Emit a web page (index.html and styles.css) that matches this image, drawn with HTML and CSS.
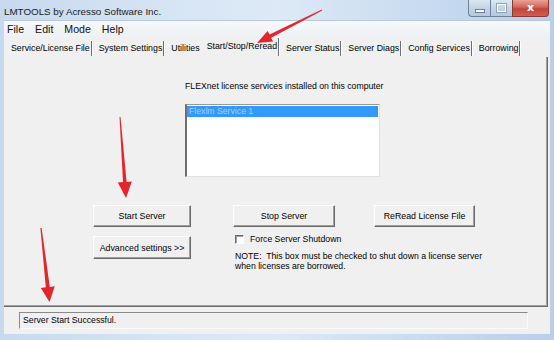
FILE: index.html
```html
<!DOCTYPE html>
<html>
<head>
<meta charset="utf-8">
<link rel="stylesheet" href="styles.css">
</head>
<body>
<div class="win">
  <div class="titlebar">
    <span class="title">LMTOOLS by Acresso Software Inc.</span>
    <div class="ctrls">
      <div class="cbtn min"><span class="minbar"></span></div>
      <div class="cbtn max"><span class="maxbox"></span></div>
      <div class="cbtn close"><span class="x">x</span></div>
    </div>
  </div>
  <div class="client">
    <div class="menubar">
      <span class="mi">File</span><span class="mi">Edit</span><span class="mi">Mode</span><span class="mi">Help</span>
    </div>
    <div class="tabs">
      <span class="tab">Service/License File</span>
      <span class="tab">System Settings</span>
      <span class="tab nosep">Utilities</span>
      <span class="tab sel">Start/Stop/Reread</span>
      <span class="tab">Server Status</span>
      <span class="tab">Server Diags</span>
      <span class="tab">Config Services</span>
      <span class="tab">Borrowing</span>
    </div>
    <div class="page">
      <div class="svc">
        <div class="svc-label">FLEXnet license services installed on this computer</div>
        <div class="listbox">
          <div class="item selitem">Flexlm Service 1</div>
        </div>
      </div>
      <div class="controls">
        <button class="btn c1">Start Server</button>
        <button class="btn c3">Stop Server</button>
        <button class="btn c5">ReRead License File</button>
        <button class="btn c1 r2">Advanced settings &gt;&gt;</button>
        <div class="force r2">
          <div class="chkrow"><span class="chk"></span><span>Force Server Shutdown</span></div>
          <div class="note">NOTE:&nbsp; This box must be checked to shut down a license server<br>when licenses are borrowed.</div>
        </div>
      </div>
    </div>
    <div class="status">
      <div class="field">Server Start Successful.</div>
    </div>
  </div>
</div>
<svg class="arrows" width="554" height="340" viewBox="0 0 554 340">
  <polygon fill="#e4252c" points="322.2,10.4 271.2,37.8 273.1,41.5 257,43 267.6,30.9 269.5,34.6 321.8,9.6"/>
  <polygon fill="#e4252c" points="120.5,117 126.6,181.9 131.8,181.5 126,198 117.8,182.5 123,182.1 119.5,117"/>
  <polygon fill="#e4252c" points="41.6,227.9 49.8,286.9 54.75,286.3 49.5,302 40.85,287.9 45.8,287.3 40.4,228.1"/>
</svg>
</body>
</html>
```
FILE: styles.css
```css
html, body {
  margin: 0;
  padding: 0;
  width: 554px;
  height: 340px;
  overflow: hidden;
  background: #c9dbee;
}
.win {
  position: relative;
  width: 554px;
  height: 340px;
  display: flex;
  flex-direction: column;
  background: linear-gradient(to right, #c6d9ee 0%, #d6e5f4 30%, #dde9f6 50%, #c9dcf0 75%, #b9cfe8 100%);
  font-family: "Liberation Sans", Arial, sans-serif;
  color: #000;
}
.titlebar {
  height: 20px;
  display: flex;
  align-items: center;
  padding-left: 4px;
}
.title {
  font-size: 9.8px;
  color: #1a1a1a;
  padding-top: 2px;
}
.ctrls {
  margin-left: auto;
  margin-right: 5px;
  align-self: flex-start;
  display: flex;
}
.cbtn {
  height: 17px;
  border: 1px solid #6d819b;
  border-top: none;
  display: flex;
  align-items: center;
  justify-content: center;
  box-sizing: border-box;
}
.min {
  width: 22px;
  border-right: none;
  border-bottom-left-radius: 4px;
  background: linear-gradient(#dce7f3, #c3d4e8 50%, #b4c8df);
}
.max {
  width: 22px;
  border-right: none;
  background: linear-gradient(#dce7f3, #c3d4e8 50%, #b4c8df);
}
.close {
  width: 37px;
  border-bottom-right-radius: 4px;
  background: linear-gradient(#e8a393, #d2655a 45%, #c2443a 55%, #cf5f4f);
  border-color: #8a3a33;
}
.minbar {
  width: 8px;
  height: 2px;
  margin-top: 5px;
  background: #fff;
  border: 1px solid #6a7d95;
}
.maxbox {
  width: 7px;
  height: 6px;
  border: 1px solid #fff;
  outline: 1px solid #8fa2ba;
}
.x {
  color: #fff;
  font-family: "DejaVu Sans", sans-serif;
  font-weight: bold;
  font-size: 11px;
  line-height: 11px;
  margin-top: -2px;
}
.client {
  flex: 1;
  margin: 0 4px 6px 4px;
  background: #f0f0f0;
  display: flex;
  flex-direction: column;
}
.menubar {
  height: 17px;
  display: flex;
  align-items: center;
  padding-left: 3px;
  background: linear-gradient(#f7f8fa, #eef1f5);
  border-top: 1px solid #b6c8dc;
  box-sizing: border-box;
}
.mi {
  font-size: 10.6px;
  margin-right: 11px;
  color: #111;
}
.tabs {
  height: 20px;
  display: flex;
  align-items: center;
  padding-left: 3px;
}
.tab {
  font-size: 8.8px;
  padding: 0 1px 0 4px;
  height: 15px;
  line-height: 15px;
  margin-top: 3px;
  border-right: 1px solid #6f6f6f;
  box-shadow: 1px 0 0 #ffffff;
  margin-right: 3px;
  white-space: nowrap;
}
.tab.nosep {
  border-right: 1px solid transparent;
  box-shadow: none;
  margin-right: 2px;
}
.tab.sel {
  margin-top: 0;
  height: 18px;
  line-height: 17px;
  padding: 0 1px 0 3px;
}
.page {
  flex: 1;
  margin-right: 2px;
  border-right: 1px solid #6b6b6b;
  border-bottom: 1px solid #6b6b6b;
  box-shadow: inset -1px -1px 0 #a0a0a0;
  display: flex;
  flex-direction: column;
  font-size: 8.7px;
}
.svc {
  padding-left: 181px;
  padding-top: 24px;
}
.svc-label {
  height: 11px;
  line-height: 11px;
}
.listbox {
  margin-top: 12px;
  width: 195px;
  height: 73px;
  box-sizing: border-box;
  background: #fff;
  border-left: 2px solid #6e6e6e;
  border-top: 1px solid #9a9a9a;
  border-right: 1px solid #e2e2e2;
  border-bottom: 1px solid #e2e2e2;
  padding: 1px 1px 0 0;
}
.item {
  height: 11px;
  line-height: 11px;
  padding-left: 2px;
}
.selitem {
  background: #3399ff;
  color: #a9d0f7;
}
.controls {
  display: grid;
  grid-template-columns: 98px 42px 102px 39px 101px;
  grid-template-rows: 22px auto;
  padding-left: 89px;
  margin-top: 28px;
}
.btn {
  font-family: "Liberation Sans", Arial, sans-serif;
  font-size: 8.8px;
  color: #000;
  background: #f0f0f0;
  height: 22px;
  border: 1px solid;
  border-color: #ffffff #696969 #696969 #ffffff;
  box-shadow: inset -1px -1px 0 #a0a0a0;
  padding: 0;
  margin: 0;
}
.c1 { grid-column: 1; }
.c3 { grid-column: 3; }
.c5 { grid-column: 5; }
.btn.r2 {
  grid-row: 2;
  margin-top: 9px;
  height: 23px;
}
.force {
  grid-row: 2;
  grid-column: 3 / 6;
  padding-left: 2px;
  margin-top: 7px;
  white-space: nowrap;
}
.chkrow {
  display: flex;
  align-items: center;
  height: 10px;
}
.chk {
  width: 9px;
  height: 9px;
  box-sizing: border-box;
  border-left: 1px solid #6d6d6d;
  border-top: 1px solid #6d6d6d;
  border-right: 1px solid #ffffff;
  border-bottom: 1px solid #ffffff;
  box-shadow: inset 1px 1px 0 #a0a0a0;
  background: #fff;
  margin-right: 6px;
}
.note {
  margin-top: 8px;
  line-height: 9.5px;
}
.status {
  height: 27px;
  padding: 5px 0 0 15px;
  box-sizing: border-box;
}
.field {
  width: 509px;
  height: 17px;
  box-sizing: border-box;
  border-top: 1px solid #8a8a8a;
  border-left: 1px solid #8a8a8a;
  border-right: 1px solid #fafafa;
  border-bottom: 1px solid #fafafa;
  font-size: 8.7px;
  line-height: 15px;
  padding-left: 3px;
}
.arrows {
  position: absolute;
  left: 0;
  top: 0;
  pointer-events: none;
}
```
